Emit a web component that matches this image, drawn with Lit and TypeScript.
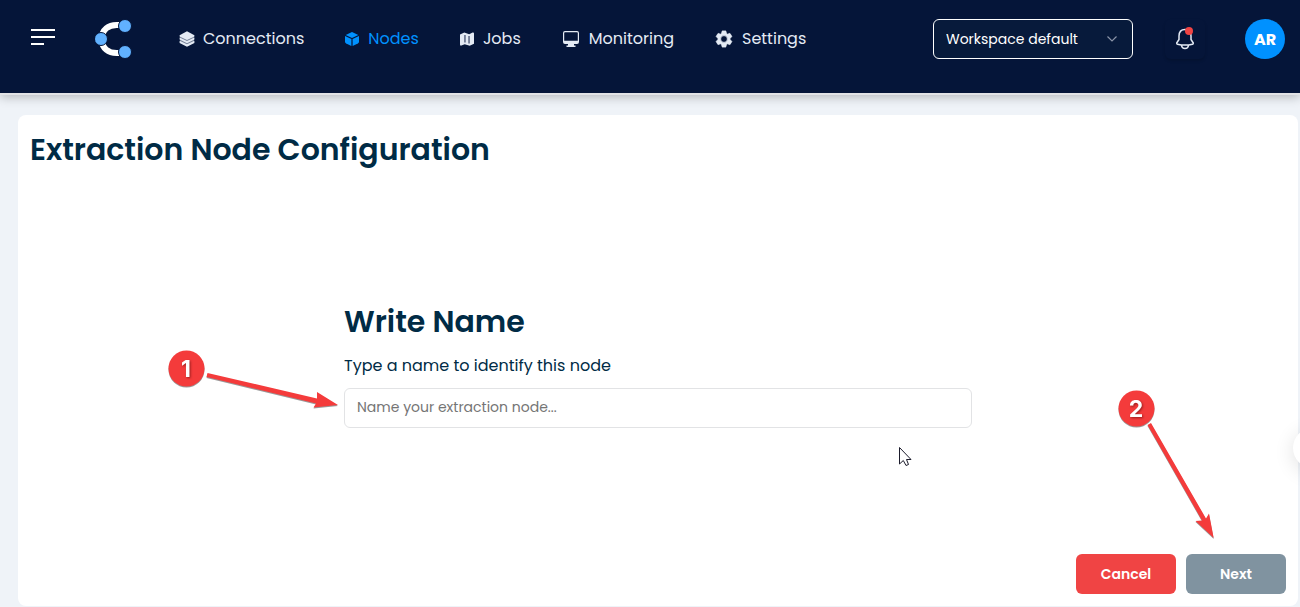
import { LitElement, html, css } from "lit";
import { customElement, state } from "lit/decorators.js";
import { classMap } from "lit/directives/class-map.js";

const icons = {
  layers: html`<svg class="icon" width="16" height="16" viewBox="0 0 16 16" aria-hidden="true">
    <path fill="currentColor" opacity="0.5" d="M8 1 15 5V11.500L8 15 1 11.500V5z" />
    <path fill="currentColor" d="M8 .2 15.400 4.200V5.400L8 9 .6 5.400V4.200z" />
    <path fill="currentColor" d="M.6 6.500 8 10 15.400 6.500V8.600L8 12.300.6 8.600z" />
    <path fill="currentColor" d="M.6 9.800 8 13.300 15.400 9.800V11.900L8 15.800.6 11.900z" />
  </svg>`,
  cube: html`<svg class="icon" width="16" height="16" viewBox="0 0 16 16" aria-hidden="true">
    <path fill="currentColor" d="M8 1 14.300 3.900 8 7 1.700 3.900z" />
    <path fill="currentColor" d="M1 5 7.400 8.100V15L2.200 12.600Q1 12 1 10.800z" />
    <path fill="currentColor" d="M15 5 8.600 8.100V15L13.800 12.600Q15 12 15 10.800z" />
  </svg>`,
  map: html`<svg class="icon" width="16" height="16" viewBox="0 0 16 16" aria-hidden="true">
    <path fill="currentColor" d="M1 3.500 5.300 1.600 10.200 3.200 13.600 1.600Q15 1.200 15 2.600V12.800L10.700 14.800 5.700 13.200 2.400 14.600Q1 15 1 13.600z" />
    <path fill="#6b7690" d="M5.100 4H6.800V11.600H5.100zM9.200 5H10.900V12.500H9.200z" />
  </svg>`,
  monitor: html`<svg class="icon" width="20" height="20" viewBox="-1 -1 20 20" aria-hidden="true">
    <path fill="currentColor" fill-rule="evenodd" d="M3 1H15Q17 1 17 3V12Q17 14 15 14H12V15.500H13.500V17H4.500V15.500H6V14H3Q1 14 1 12V3Q1 1 3 1zM3 2.200Q2.200 2.200 2.200 3V10.800H15.800V3Q15.800 2.200 15 2.200z" />
  </svg>`,
  gear: html`<svg class="icon" width="20" height="20" viewBox="0 0 24 24" aria-hidden="true">
    <path fill="currentColor" stroke="currentColor" stroke-linejoin="round" d="M19.140 12.940c.04-.3.060-.61.060-.94s-.020-.64-.070-.94l2.030-1.580c.18-.14.23-.41.120-.61l-1.920-3.320c-.12-.22-.37-.29-.59-.22l-2.390.96c-.5-.38-1.030-.7-1.620-.94L14.400 2.810c-.040-.24-.24-.41-.48-.41h-3.840c-.24 0-.43.17-.47.41L9.250 5.350c-.59.24-1.130.57-1.620.94l-2.390-.96c-.22-.08-.47 0-.59.22L2.740 8.870c-.12.21-.08.47.12.61l2.030 1.580c-.05.3-.09.63-.09.94s.020.64.070.94l-2.030 1.580c-.18.14-.23.41-.12.61l1.920 3.320c.12.22.37.29.59.22l2.390-.96c.5.38 1.030.7 1.620.94l.36 2.540c.05.24.24.41.48.41h3.840c.24 0 .44-.17.47-.41l.36-2.540c.59-.24 1.130-.56 1.620-.94l2.390.96c.22.08.47 0 .59-.22l1.920-3.320c.12-.22.070-.47-.12-.61zM12 16.100a4.100 4.100 0 1 1 0-8.200 4.100 4.100 0 0 1 0 8.200z" />
  </svg>`,
};

const navItems = [
  { label: "Connections", icon: icons.layers },
  { label: "Nodes", icon: icons.cube },
  { label: "Jobs", icon: icons.map },
  { label: "Monitoring", icon: icons.monitor },
  { label: "Settings", icon: icons.gear },
];

@customElement("app-header")
export class AppHeader extends LitElement {
  @state() private active = "Nodes";

  static styles = css`
    :host {
      display: flex;
      align-items: flex-start;
      box-sizing: border-box;
      min-height: 95px;
      padding: 19px 15px 0 31px;
      color: #e4eaf4;
      background: #051539;
      border-bottom: 2px solid #e2e3e6;
      box-shadow: 0 2px 10px rgba(0, 0, 0, 0.25);
    }
    button {
      padding: 0;
      border: 0;
      font: inherit;
      color: inherit;
      background: none;
      cursor: pointer;
    }
    svg {
      display: block;
    }
    .menu {
      height: 36px;
      margin-right: 40px;
    }
    .logo {
      margin-right: 46px;
    }
    .nav {
      display: flex;
      gap: 40px;
    }
    .link {
      display: flex;
      align-items: center;
      gap: 8px;
      height: 40px;
      font-size: 16px;
      line-height: 24px;
      color: inherit;
      text-decoration: none;
    }
    .active {
      color: #0091ff;
    }
    .tools {
      display: flex;
      align-items: center;
      margin-left: auto;
    }
    .workspace {
      display: grid;
      align-items: center;
      width: 200px;
      margin-right: 32px;
    }
    .select {
      grid-area: 1 / 1;
      height: 40px;
      padding: 0 12px;
      border: 1px solid #fff;
      border-radius: 6px;
      appearance: none;
      font: inherit;
      font-size: 14px;
      color: #fff;
      background: #071a3b;
    }
    .chevron {
      grid-area: 1 / 1;
      justify-self: end;
      margin-right: 15px;
      pointer-events: none;
    }
    .bell {
      display: grid;
      place-items: center;
      width: 40px;
      height: 40px;
      margin-right: 40px;
      border-radius: 6px;
      box-shadow: 0 2px 3px rgba(0, 0, 0, 0.15);
    }
    .avatar {
      width: 40px;
      height: 40px;
      border-radius: 50%;
      font-size: 16px;
      font-weight: 700;
      color: #fff;
      background: #0091ff;
    }
  `;

  render() {
    return html`
      <button class="menu" aria-label="Menu">
        <svg width="24" height="18" viewBox="0 0 24 18" aria-hidden="true">
          <path fill="none" stroke="#fff" stroke-width="2" d="M0 2H24M0 9H24M0 16H13" />
        </svg>
      </button>
      <a class="logo" href="#" aria-label="Home">
        <svg width="38" height="40" viewBox="0 0 38 40" aria-hidden="true">
          <path fill="none" stroke="#fff" stroke-width="6" d="M24 6C13 5 7 11 6.500 20 7 29 13 35 24 34" />
          <g fill="#61b1ff" stroke="#051539" stroke-width="1">
            <circle cx="30" cy="7" r="6.500" />
            <circle cx="6" cy="20" r="6.500" />
            <circle cx="30" cy="33" r="6.500" />
          </g>
        </svg>
      </a>
      <nav class="nav">
        ${navItems.map(
          (item) => html`<a
            class=${classMap({ link: true, active: item.label === this.active })}
            href="#"
            @click=${() => (this.active = item.label)}
            >${item.icon}<span>${item.label}</span></a
          >`
        )}
      </nav>
      <div class="tools">
        <div class="workspace">
          <select class="select" aria-label="Workspace">
            <option>Workspace default</option>
          </select>
          <svg class="chevron" width="12" height="8" viewBox="0 0 12 8" aria-hidden="true">
            <path fill="none" stroke="#8a94a8" stroke-width="1.200" d="M1.500 1.500 6 6 10.500 1.500" />
          </svg>
        </div>
        <button class="bell" aria-label="Notifications">
          <svg width="24" height="24" viewBox="0 0 24 24" aria-hidden="true">
            <path fill="none" stroke="#e4eaf4" stroke-width="1.500" stroke-linejoin="round" d="M12 2.500C8 2.500 6 5 6 9V12.500L3.700 16Q3.500 17 4.500 17.200 12 19 19.500 17.200 20.500 17 20.300 16L18 12.500V9C18 5 16 2.500 12 2.500zM8.500 18.500C9 22.500 15 22.500 15.500 18.500" />
            <circle cx="16" cy="4" r="4" fill="#f04444" />
          </svg>
        </button>
        <button class="avatar">AR</button>
      </div>
    `;
  }
}

@customElement("app-root")
export class AppRoot extends LitElement {
  static styles = css`
    :host {
      position: relative;
      display: flex;
      flex-direction: column;
      min-height: 100vh;
      overflow: hidden;
      font-family: Poppins, Inter, sans-serif;
      color: #002b45;
      background: #eff3f8;
    }
    .main {
      display: flex;
      flex: 1;
      padding: 20px 2px 1px 18px;
    }
    .card {
      display: flex;
      flex: 1;
      flex-direction: column;
      padding: 12px;
      border-radius: 8px;
      background: #fff;
    }
    .title {
      margin: 0;
      font-size: 30px;
      font-weight: 600;
      line-height: 46px;
    }
    .form {
      display: flex;
      flex: 1;
      flex-direction: column;
      justify-content: center;
      width: 50%;
      margin: 0 auto;
    }
    .label {
      margin: 9px 0 10px;
      font-size: 16px;
      line-height: 24px;
    }
    .input {
      box-sizing: border-box;
      height: 40px;
      padding: 0 12px 2px;
      border: 1px solid #e2e3e5;
      border-radius: 6px;
      font: inherit;
      font-size: 14px;
      color: inherit;
      background: #fff;
    }
    .input::placeholder {
      color: #757575;
    }
    .actions {
      display: flex;
      justify-content: flex-end;
      gap: 10px;
    }
    .button {
      width: 100px;
      height: 40px;
      padding: 0;
      border: 0;
      border-radius: 6px;
      font: inherit;
      font-size: 14px;
      font-weight: 600;
      color: #fff;
      background: #f04444;
    }
    .next {
      background: #8093a0;
    }
    .handle {
      position: absolute;
      top: 428px;
      right: -33px;
      width: 40px;
      height: 40px;
      padding: 0;
      border: 0;
      border-radius: 50%;
      background: #fff;
      box-shadow: 0 4px 20px rgba(0, 0, 0, 0.12);
    }
    .notes {
      position: absolute;
      top: 0;
      left: 0;
      pointer-events: none;
    }
    .number {
      font: 700 23px Inter, sans-serif;
      fill: #fff;
      text-anchor: middle;
      filter: drop-shadow(1px 1px 1px rgba(60, 0, 0, 0.5));
    }
    .mark {
      fill: #f43b3b;
      filter: drop-shadow(0 1px 0 rgba(0, 0, 0, 0.4));
    }
  `;

  render() {
    return html`
      <app-header></app-header>
      <main class="main">
        <section class="card">
          <h1 class="title">Extraction Node Configuration</h1>
          <div class="form">
            <h2 class="title">Write Name</h2>
            <label class="label" for="node-name">Type a name to identify this node</label>
            <input class="input" id="node-name" type="text" placeholder="Name your extraction node..." />
          </div>
          <div class="actions">
            <button class="button">Cancel</button>
            <button class="button next">Next</button>
          </div>
        </section>
      </main>
      <button class="handle" aria-label="Open panel"></button>
      <svg class="notes" width="1300" height="607" viewBox="0 0 1300 607">
        <g class="mark">
          <circle cx="186.500" cy="368.500" r="18" />
          <path d="M207.500 373 317 398.500 317 392 338 405 313.500 407.500 316 403.500 206.500 377z" />
          <circle cx="1136.500" cy="408.500" r="18" />
          <path d="M1151 423 1206 518.500 1209 513.500 1213.700 538 1195.500 521 1202 520.500 1147.500 425z" />
        </g>
        <text class="number" x="186" y="377">1</text>
        <text class="number" x="1136" y="417">2</text>
        <path fill="#fff" stroke="#1b1b2b" d="M899.500 447.500V464L903.300 460.500 906 465.500 908.500 464.500 906.500 459.500H911z" />
      </svg>
    `;
  }
}
